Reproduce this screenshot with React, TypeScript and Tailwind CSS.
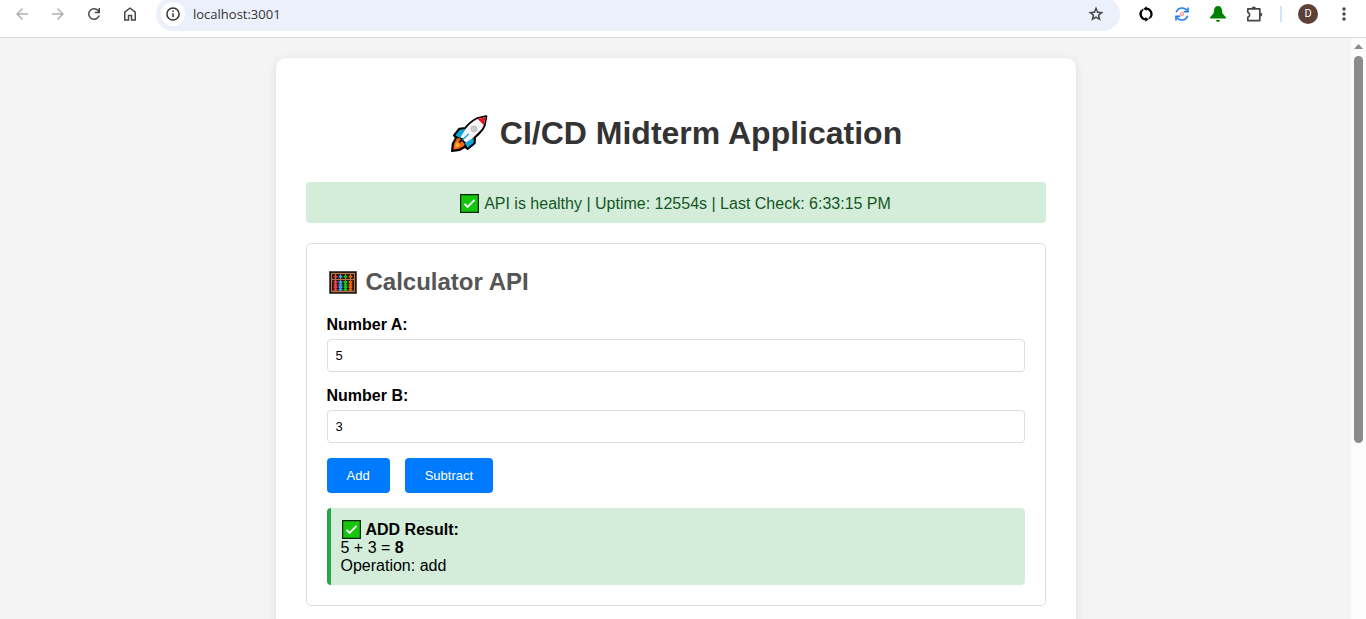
import { useState } from "react";
import type { ReactNode } from "react";

function ToolbarButton({ label, children }: { label: string; children: ReactNode }) {
  return (
    <button type="button" aria-label={label} className="flex h-7 w-9 shrink-0 items-center justify-center text-[#474747]">
      {children}
    </button>
  );
}

function MaterialIcon({ d, className }: { d: string; className: string }) {
  return (
    <svg viewBox="0 -960 960 960" fill="currentColor" className={className} aria-hidden="true">
      <path d={d} />
    </svg>
  );
}

function BrowserToolbar() {
  return (
    <header className="flex h-[38px] shrink-0 items-end overflow-hidden border-b border-[#dcdcdc] bg-white pb-[6px]">
      <div className="flex h-[34px] w-full shrink-0 items-center px-1">
        <ToolbarButton label="Back">
          <MaterialIcon className="size-[18px] text-[#b0b0b0]" d="m313-440 224 224-57 56-320-320 320-320 57 56-224 224h487v80H313Z" />
        </ToolbarButton>
        <ToolbarButton label="Forward">
          <MaterialIcon className="size-[18px] text-[#b0b0b0]" d="M647-440H160v-80h487L423-744l57-56 320 320-320 320-57-56 224-224Z" />
        </ToolbarButton>
        <ToolbarButton label="Reload">
          <MaterialIcon className="size-[18px]" d="M480-160q-134 0-227-93t-93-227q0-134 93-227t227-93q69 0 132 28.500T720-690v-110h80v280H520v-80h168q-32-56-87.500-88T480-720q-100 0-170 70t-70 170q0 100 70 170t170 70q77 0 139-44t87-116h84q-28 106-114 173t-196 67Z" />
        </ToolbarButton>
        <ToolbarButton label="Home">
          <MaterialIcon className="size-[18px]" d="M240-200h120v-240h240v240h120v-360L480-740 240-560v360Zm-80 80v-480l320-240 320 240v480H520v-240h-80v240H160Z" />
        </ToolbarButton>

        <div className="mx-2 flex h-[34px] flex-1 items-center rounded-full bg-[#ecf0fa] pr-[15px] pl-[5px]">
          <button type="button" aria-label="View site information" className="flex size-6 shrink-0 items-center justify-center rounded-full bg-white">
            <svg viewBox="0 0 16 16" className="size-4 text-[#333333]" fill="none" stroke="currentColor" strokeWidth="1.500" aria-hidden="true">
              <circle cx="8" cy="8" r="6.100" />
              <path d="M8 7.200v4M8 4.600v1.400" />
            </svg>
          </button>
          <input
            type="text"
            aria-label="Address"
            defaultValue="localhost:3001"
            className="ml-2 min-w-0 flex-1 bg-transparent font-['Open_Sans',sans-serif] text-[13px] leading-5 text-[#333333] outline-none"
          />
          <button type="button" aria-label="Bookmark this page" className="shrink-0 text-[#474747]">
            <MaterialIcon className="size-[18px]" d="m354-287 126-76 126 77-33-144 111-96-146-13-58-136-58 135-146 13 111 97-33 143ZM233-120l65-281L80-590l288-25 112-265 112 265 288 25-218 189 65 281-247-149-247 149Z" />
          </button>
        </div>

        <ToolbarButton label="Sync">
          <svg viewBox="0 0 16 16" className="size-4 text-black" aria-hidden="true">
            <path d="M8 2.500A5.500 5.500 0 0 1 12.200 11.500M8 13.500A5.500 5.500 0 0 1 3.800 4.500" fill="none" stroke="currentColor" strokeWidth="2.200" />
            <path d="M5.400 2.700 8.600.200v4.800ZM10.600 13.300 7.400 15.800V11Z" fill="currentColor" />
            <path d="M3.800 4.500 5.300 3.300M12.200 11.500l-1.500 1.200" stroke="currentColor" strokeWidth="1.600" />
          </svg>
        </ToolbarButton>
        <ToolbarButton label="Refresh extension">
          <svg viewBox="0 0 16 16" className="size-4" fill="none" stroke="#1a7af8" strokeWidth="1.600" aria-hidden="true">
            <path d="M2.300 6.200C3.300 3.300 5.500 2 8 2c2.200 0 4 1 5 2.600M13.700 9.800C12.700 12.700 10.500 14 8 14c-2.200 0-4-1-5-2.600" />
            <path d="M14 1.500v4.300H9.800M2 14.500v-4.300h4.200" />
            <circle cx="8" cy="8" r="1.500" stroke="#ff8a80" strokeWidth="1.200" />
          </svg>
        </ToolbarButton>
        <ToolbarButton label="Notifications">
          <svg viewBox="0 0 16 16" className="size-4 text-[#008000]" fill="currentColor" aria-hidden="true">
            <path d="M8 0C5.800 0 4.500 1.300 4.200 3.200L3.600 7.200 0 11.500v1h16v-1l-3.600-4.300-.6-4C11.500 1.300 10.200 0 8 0ZM5.800 14h4.400Q9.600 16 8 16t-2.200-2Z" />
          </svg>
        </ToolbarButton>
        <ToolbarButton label="Extensions">
          <svg viewBox="0 0 18 18" className="size-[18px]" aria-hidden="true">
            <path d="M2.800 3.800h12v11.800h-12v-3.400C5.300 11.400 5.300 8 2.800 7.200Z" fill="none" stroke="currentColor" strokeWidth="1.700" strokeLinejoin="round" />
            <path d="M6.600 3.600a2.200 2.200 0 0 1 4.400 0ZM15.200 7.500a2.100 2.100 0 0 1 0 4.200Z" fill="currentColor" />
          </svg>
        </ToolbarButton>
        <div className="mx-2 h-4 w-[2px] shrink-0 bg-[#d3e3fd]" />
        <button type="button" aria-label="Profile" className="flex w-9 shrink-0 items-center justify-center">
          <span className="flex size-5 items-center justify-center rounded-full bg-[#5d4037] font-[Roboto,sans-serif] text-[11px] leading-5 text-white">D</span>
        </button>
        <ToolbarButton label="Menu">
          <svg viewBox="0 0 4 14" className="h-[14px] w-1" fill="currentColor" aria-hidden="true">
            <circle cx="2" cy="2" r="1.700" />
            <circle cx="2" cy="7" r="1.700" />
            <circle cx="2" cy="12" r="1.700" />
          </svg>
        </ToolbarButton>
      </div>
    </header>
  );
}

function Rocket() {
  return (
    <svg viewBox="35 28 111 111" className="size-[37px] shrink-0" strokeLinejoin="round" aria-hidden="true">
      <path d="M141 32 113 38Q100 44 89 55L78 67 60 69 44 89 50 97 40 115 38 136 61 133 77 124 85 130 106 113 107 95 119 84Q132 71 136 59Z" fill="#000" stroke="#000" strokeWidth="6" />
      <path d="M139 34 114 40Q101 46 91 56L60 91 83 114 118 80Q130 69 134 57Z" fill="#f7f7f7" />
      <path d="M139 34 115 40 133 58Z" fill="#e81224" />
      <path d="M79 70 62 72 48 89 62 97ZM103 96 103 111 85 126 76 113Z" fill="#10a5dd" />
      <path d="M53 98 44 114 42 132 59 129 74 121 76 115 61 98Z" fill="#f7630c" />
      <path d="M54 108 49 116 48 126 57 123 64 118Z" fill="#ffb02e" />
      <path d="M72 98 60 110" fill="none" stroke="#000" strokeWidth="5" />
      <path d="M88 85 69 103" fill="none" stroke="#10a5dd" strokeWidth="4" />
      <circle cx="104" cy="70" r="9" fill="#cccccc" stroke="#aaaaaa" strokeWidth="2" />
    </svg>
  );
}

function CheckMark() {
  return (
    <svg viewBox="0 0 18 18" className="size-[19px] shrink-0" aria-hidden="true">
      <rect width="18" height="18" fill="#0d260c" />
      <rect x="1.200" y="1.200" width="15.600" height="15.600" fill="#16c60c" />
      <path d="m4.200 9.300 3 3 6.600-6.800" fill="none" stroke="#fff" strokeWidth="1.700" />
    </svg>
  );
}

const rods = [
  { x: 6, color: "#f03a4a" },
  { x: 11, color: "#3aa0f0" },
  { x: 16, color: "#16c60c" },
  { x: 21, color: "#f7630c" },
];

function Abacus() {
  return (
    <svg viewBox="0 0 28 23" className="h-[23px] w-7 shrink-0" aria-hidden="true">
      <rect width="28" height="23" fill="#777777" />
      <rect x="0.700" y="0.700" width="26.600" height="21.600" fill="#000" />
      <path d="M2.500 2v19M25.500 2v19M2 2.500h24M2 20.500h24M2 8.500h24" stroke="#b5764a" strokeWidth="1.400" />
      {rods.map(({ x, color }) => (
        <g key={x} fill={color}>
          <rect x={x} y="3" width="1" height="17" fill="#b5764a" />
          <rect x={x - 1.5} y="4.500" width="4" height="2.300" rx="0.600" />
          {[10, 12.500, 15, 17.500].map((y) => (
            <rect key={y} x={x - 1.5} y={y} width="4" height="2.200" rx="0.600" />
          ))}
        </g>
      ))}
    </svg>
  );
}

interface NumberFieldProps {
  id: string;
  label: string;
  value: number;
  onChange: (value: number) => void;
}

function NumberField({ id, label, value, onChange }: NumberFieldProps) {
  return (
    <div className="mb-[15px]">
      <label htmlFor={id} className="mb-[5px] block leading-[18px] font-bold">
        {label}
      </label>
      <input
        id={id}
        type="number"
        value={value}
        onChange={(event) => onChange(Number(event.target.value))}
        className="block w-full rounded-[4px] border border-[#dddddd] bg-white p-2 text-[13px] leading-[15px] [appearance:textfield]"
      />
    </div>
  );
}

type Operation = "add" | "subtract";

function Calculator() {
  const [a, setA] = useState(5);
  const [b, setB] = useState(3);
  const [result, setResult] = useState({ a: 5, b: 3, operation: "add" as Operation });

  const value = result.operation === "add" ? result.a + result.b : result.a - result.b;
  const buttonClass = "rounded-[4px] bg-[#007bff] px-5 py-2.5 text-[13px] leading-[15px] text-white hover:bg-[#0056b3]";

  return (
    <section className="rounded-[5px] border border-[#dddddd] p-5">
      <h2 className="mb-4 flex items-center gap-[9px] pl-[2px] text-2xl leading-9 font-bold text-[#555555]">
        <Abacus />
        Calculator API
      </h2>
      <NumberField id="number-a" label="Number A:" value={a} onChange={setA} />
      <NumberField id="number-b" label="Number B:" value={b} onChange={setB} />
      <div className="flex gap-[15px]">
        <button type="button" className={buttonClass} onClick={() => setResult({ a, b, operation: "add" })}>
          Add
        </button>
        <button type="button" className={buttonClass} onClick={() => setResult({ a, b, operation: "subtract" })}>
          Subtract
        </button>
      </div>
      <div className="mt-[15px] rounded-[4px] border-l-4 border-[#28a745] bg-[#d4edda] px-2.5 pt-3 pb-2.5 leading-[18px]">
        <p className="flex items-center gap-[5px] pl-px leading-[19px] font-bold">
          <CheckMark />
          {result.operation.toUpperCase()} Result:
        </p>
        <p>
          {result.a} {result.operation === "add" ? "+" : "-"} {result.b} = <strong>{value}</strong>
        </p>
        <p>Operation: {result.operation}</p>
      </div>
    </section>
  );
}

function ScrollRail() {
  return (
    <div className="flex w-[15px] shrink-0 flex-col items-center bg-[#fcfcfc]" aria-hidden="true">
      <svg viewBox="0 0 9 5" className="mt-[6px] h-[5px] w-[9px] shrink-0" fill="#8b8b8b">
        <path d="M4.500 0 9 5H0Z" />
      </svg>
      <div className="mt-[7px] h-2/3 w-[9px] rounded-full bg-[#8b8b8b]" />
    </div>
  );
}

export default function App() {
  return (
    <div className="flex h-screen flex-col overflow-hidden font-['Liberation_Sans',Arial,sans-serif] text-base text-black">
      <BrowserToolbar />
      <div className="flex min-h-0 flex-1">
        <main className="min-w-0 flex-1 overflow-hidden bg-[#f4f4f4] p-5">
          <div className="mx-auto max-w-[800px] rounded-[10px] bg-white p-[30px] shadow-[0_2px_10px_rgba(0,0,0,0.1)]">
            <h1 className="mt-[26px] mb-[30px] flex items-center justify-center gap-3 pl-[2px] text-[32px] leading-[38px] font-bold text-[#333333]">
              <Rocket />
              CI/CD Midterm Application
            </h1>
            <p className="mb-5 flex items-center justify-center gap-[5px] rounded-[4px] bg-[#d4edda] px-2.5 pt-3 pb-2.5 leading-[19px] text-[#155724]">
              <CheckMark />
              API is healthy | Uptime: 12554s | Last Check: 6:33:15 PM
            </p>
            <Calculator />
          </div>
        </main>
        <ScrollRail />
      </div>
    </div>
  );
}
